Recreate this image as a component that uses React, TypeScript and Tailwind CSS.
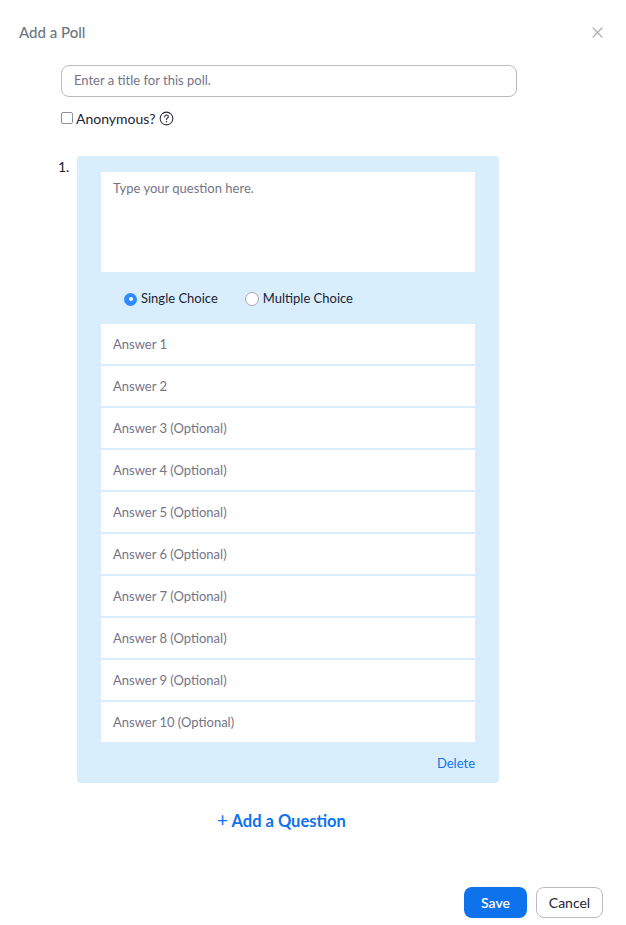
import React from "react";

const answers = [
  "Answer 1",
  "Answer 2",
  "Answer 3 (Optional)",
  "Answer 4 (Optional)",
  "Answer 5 (Optional)",
  "Answer 6 (Optional)",
  "Answer 7 (Optional)",
  "Answer 8 (Optional)",
  "Answer 9 (Optional)",
  "Answer 10 (Optional)",
];

export default function App() {
  return (
    <div
      className="w-[626px] h-[925px] bg-white flex flex-col"
      style={{ fontFamily: "Lato, 'Open Sans', sans-serif" }}
    >
      {/* Header */}
      <div className="h-[64px] flex items-center justify-between pl-[19px] pr-[23px]">
        <div className="text-[15px] text-[#6e7680] font-medium">Add a Poll</div>
        <svg width="11" height="11" viewBox="0 0 10 10" className="mt-[1px]">
          <path d="M1 1 L9 9 M9 1 L1 9" stroke="#b3b3b8" strokeWidth="1.3" strokeLinecap="round" />
        </svg>
      </div>

      {/* Title input */}
      <div className="mt-[1px] ml-[61px] w-[456px] h-[32px] border border-[#babac4] rounded-[8px] flex items-center pl-[12px]">
        <span className="text-[13px] text-[#747487]">Enter a title for this poll.</span>
      </div>

      {/* Anonymous */}
      <div className="mt-[11px] ml-[61px] h-[20px] flex items-center">
        <div className="w-[12px] h-[12px] border border-[#8f8f99] rounded-[2px] bg-white" />
        <span className="ml-[3px] text-[14px] text-[#232333]">Anonymous?</span>
        <svg width="15" height="15" viewBox="0 0 16 16" className="ml-[4px]">
          <circle cx="8" cy="8" r="6.8" fill="none" stroke="#232333" strokeWidth="1.1" />
          <path
            d="M6 6.3 C6 4.9 7 4.3 8 4.3 C9.1 4.3 10 5 10 6 C10 7 9.2 7.3 8.6 7.8 C8.1 8.2 8 8.6 8 9.4"
            fill="none"
            stroke="#232333"
            strokeWidth="1.1"
            strokeLinecap="round"
          />
          <circle cx="8" cy="11.4" r="0.75" fill="#232333" />
        </svg>
      </div>

      {/* Question */}
      <div className="mt-[28px] flex">
        <div className="ml-[58px] w-[19px] text-[14px] text-[#232333] leading-[20px] pt-[1px]">1.</div>
        <div className="w-[422px] bg-[#d8eefc] rounded-[4px] pt-[16px] px-[24px]">
          <div className="h-[100px] bg-white pl-[12px] pt-[3px]">
            <span className="text-[13px] text-[#747487]">Type your question here.</span>
          </div>
          <div className="h-[52px] flex items-center pl-[23px] pt-[2px]">
            <div className="w-[13px] h-[13px] rounded-full bg-[#2d8cff] flex items-center justify-center">
              <div className="w-[4px] h-[4px] rounded-full bg-white" />
            </div>
            <span className="ml-[4px] text-[13px] text-[#232333]">Single Choice</span>
            <div className="ml-[27px] w-[14px] h-[14px] rounded-full bg-white border border-[#a8a8b0]" />
            <span className="ml-[4px] text-[13px] text-[#232333]">Multiple Choice</span>
          </div>
          <div className="flex flex-col gap-[2px]">
            {answers.map((a) => (
              <div key={a} className="h-[40px] bg-white flex items-center pl-[12px] pt-[2px]">
                <span className="text-[13px] text-[#747487]">{a}</span>
              </div>
            ))}
          </div>
          <div className="h-[41px] flex items-center justify-end pt-[2px]">
            <span className="text-[13px] text-[#0e72ed]">Delete</span>
          </div>
        </div>
      </div>

      {/* Add a Question */}
      <div className="mt-[26px] pl-[217px] h-[24px] flex items-center">
        <span className="text-[16.5px] font-bold text-[#0e72ed]">
          <span className="font-normal text-[19px] leading-none">+</span> Add a Question
        </span>
      </div>

      {/* Footer */}
      <div className="mt-[54px] flex justify-end pr-[23px] gap-[9px]">
        <div className="w-[63px] h-[31px] rounded-[8px] bg-[#0e72ed] flex items-center justify-center text-[14px] font-semibold text-white">
          Save
        </div>
        <div className="w-[67px] h-[31px] rounded-[8px] border border-[#babac4] bg-white flex items-center justify-center text-[14px] text-[#232333]">
          Cancel
        </div>
      </div>
    </div>
  );
}
